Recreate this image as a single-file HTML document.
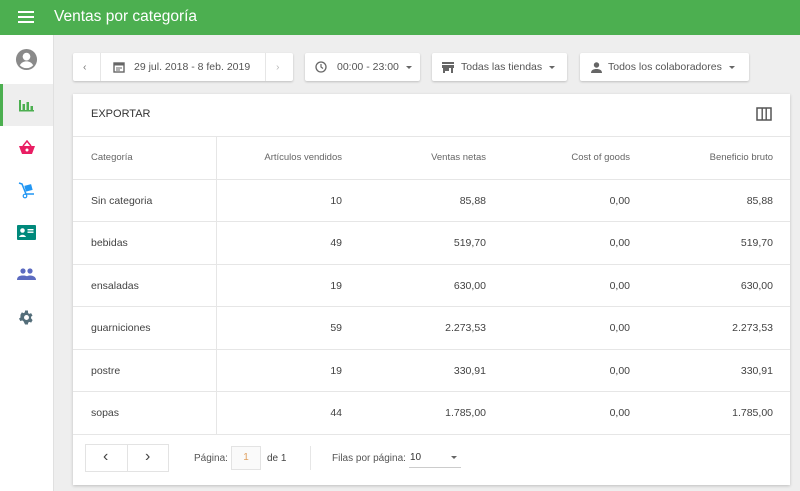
<!DOCTYPE html>
<html><head><meta charset="utf-8"><style>
*{box-sizing:border-box;margin:0;padding:0}
body{width:800px;height:491px;overflow:hidden;background:#eeeeee;font-family:"Liberation Sans",sans-serif;color:#424242;position:relative}
.top{position:absolute;left:0;top:0;width:800px;height:35px;background:#4caf50;color:#fff}
.top .t{position:absolute;left:54px;top:8px;font-size:15.5px}
.side{position:absolute;left:0;top:35px;width:54px;height:456px;background:#fff;border-right:1px solid #e0e0e0}
.ic{position:absolute;left:15px}
.btn{position:absolute;top:53px;height:28px;background:#fff;box-shadow:0 1px 2px rgba(0,0,0,.2);border-radius:2px;font-size:10.5px;color:#555;line-height:28px;white-space:nowrap}
.card{position:absolute;left:73px;top:94px;width:717px;height:391px;background:#fff;box-shadow:0 1px 3px rgba(0,0,0,.2)}
.row{position:absolute;left:0;width:717px;border-top:1px solid #e6e6e6;font-size:10.5px}
.row span{position:absolute;top:0}
.c0{left:18px}
.vl{position:absolute;left:143px;top:42px;width:1px;height:298px;background:#e6e6e6}
.caret{display:inline-block;width:0;height:0;border-left:3.5px solid transparent;border-right:3.5px solid transparent;border-top:3.5px solid #666;vertical-align:middle;margin-left:7px}
.f{position:absolute;font-size:10px;white-space:nowrap}
</style></head><body>
<div class="top">
<svg style="position:absolute;left:18px;top:11px" width="16" height="13"><rect y="0" width="16" height="2" fill="#fff"/><rect y="5" width="16" height="2" fill="#fff"/><rect y="10" width="16" height="2" fill="#fff"/></svg>
<div class="t">Ventas por categoría</div></div>
<div class="side">
<svg class="ic" style="top:13px;left:15px" width="23" height="23" viewBox="0 0 24 24"><circle cx="12" cy="12" r="11" fill="#8a8a8a"/><circle cx="12" cy="9" r="4" fill="#fff"/><path d="M5 18c2-3 4-4 7-4s5 1 7 4c-2 2-4 3-7 3s-5-1-7-3z" fill="#fff"/></svg>
<div style="position:absolute;left:0;top:49px;width:53px;height:42px;background:#eeeeee;border-left:3px solid #4caf50"></div>
<svg class="ic" style="top:64px;left:19px" width="15" height="13"><rect x="0" y="1" width="2" height="11" fill="#4caf50"/><rect x="3.5" y="5" width="2.5" height="7" fill="#4caf50"/><rect x="7.5" y="3" width="2.5" height="9" fill="#4caf50"/><rect x="11.5" y="7" width="2.5" height="5" fill="#4caf50"/><rect x="0" y="11" width="15" height="1.5" fill="#4caf50"/></svg>
<svg class="ic" style="top:105px;left:18px" width="18" height="16"><path d="M5 6l4-5 4 5" stroke="#e91e63" stroke-width="1.5" fill="none"/><path d="M1 6h16l-3 8H4z" fill="#e91e63"/><circle cx="9" cy="10" r="1.5" fill="#fff"/></svg>
<svg class="ic" style="top:146px;left:18px" width="18" height="18"><path d="M1 2l3 1 4 10h8" stroke="#2196f3" stroke-width="1.5" fill="none"/><rect x="7" y="4" width="7" height="6" fill="#2196f3" transform="rotate(-15 10 7)"/><circle cx="7" cy="15" r="1.8" fill="none" stroke="#2196f3" stroke-width="1.2"/></svg>
<svg class="ic" style="top:190px;left:17px" width="19" height="15"><rect width="19" height="15" rx="1" fill="#00897b"/><circle cx="5.5" cy="5.5" r="2.3" fill="#fff"/><path d="M2 12c1-3 6-3 7 0z" fill="#fff"/><rect x="10.5" y="4" width="6" height="1.4" fill="#fff"/><rect x="10.5" y="6.5" width="6" height="1.4" fill="#fff"/></svg>
<svg class="ic" style="top:233px;left:17px" width="19" height="12"><circle cx="6" cy="3" r="2.6" fill="#5c6bc0"/><circle cx="13" cy="3" r="2.6" fill="#5c6bc0"/><path d="M0 12c0-3.5 2.5-4.5 6-4.5s6 1 6 4.5z" fill="#5c6bc0"/><path d="M8.5 12c0-3.5 2-4.5 4.5-4.5s6 1 6 4.5z" fill="#5c6bc0"/></svg>
<svg class="ic" style="top:274px;left:18px" width="17" height="17" viewBox="0 0 24 24"><path fill="#546e7a" d="M19.4 13c.04-.3.06-.65.06-1s-.02-.7-.07-1l2.1-1.65-2-3.46-2.5 1a7.3 7.3 0 0 0-1.7-1L15 2.2h-4l-.38 2.650c-.6.25-1.2.6-1.700 1l-2.500-1-2 3.460L4.500 10c-.05.3-.08.66-.08 1s.03.7.08 1l-2.1 1.65 2 3.46 2.5-1c.52.4 1.1.75 1.7 1L11 21.8h4l.38-2.65c.6-.25 1.2-.6 1.7-1l2.5 1 2-3.46zM13 15.5a3.5 3.5 0 1 1 0-7 3.5 3.5 0 0 1 0 7z" transform="translate(-1 0)"/></svg>
</div>
<div class="btn" style="left:73px;width:220px">
<span style="position:absolute;left:10px;color:#777">‹</span>
<div style="position:absolute;left:27px;top:0;width:1px;height:28px;background:#e6e6e6"></div>
<svg style="position:absolute;left:40px;top:8px" width="12" height="12"><rect x="1" y="2" width="10" height="9" fill="none" stroke="#666" stroke-width="1.4"/><rect x="1" y="2" width="10" height="2.5" fill="#666"/><rect x="3" y="6.5" width="6" height="1" fill="#666"/><rect x="3" y="8.5" width="4" height="1" fill="#666"/></svg>
<span style="position:absolute;left:61px">29 jul. 2018 - 8 feb. 2019</span>
<div style="position:absolute;left:192px;top:0;width:1px;height:28px;background:#e6e6e6"></div>
<span style="position:absolute;left:203px;color:#bbb">›</span></div>
<div class="btn" style="left:305px;width:115px">
<svg style="position:absolute;left:10px;top:8px" width="12" height="12"><circle cx="6" cy="6" r="5" fill="none" stroke="#666" stroke-width="1.3"/><path d="M6 3v3l2 1.5" stroke="#666" stroke-width="1.2" fill="none"/></svg>
<span style="position:absolute;left:32px">00:00 - 23:00<span class="caret"></span></span></div>
<div class="btn" style="left:432px;width:135px">
<svg style="position:absolute;left:10px;top:9px" width="12" height="11"><rect x="0" y="0" width="12" height="2" fill="#666"/><rect x="0" y="3" width="12" height="3" fill="#666"/><rect x="1" y="6" width="2" height="5" fill="#666"/><rect x="9" y="6" width="2" height="5" fill="#666"/><rect x="1" y="6" width="6" height="3" fill="#666"/></svg>
<span style="position:absolute;left:29px">Todas las tiendas<span class="caret"></span></span></div>
<div class="btn" style="left:580px;width:169px">
<svg style="position:absolute;left:11px;top:9px" width="11" height="11"><circle cx="5.5" cy="3" r="2.7" fill="#666"/><path d="M0 11c0-3 2.5-4 5.5-4s5.5 1 5.5 4z" fill="#666"/></svg>
<span style="position:absolute;left:28px">Todos los colaboradores<span class="caret"></span></span></div>
<div class="card">
<div style="position:absolute;left:18px;top:14px;font-size:11px;color:#333">EXPORTAR</div>
<svg style="position:absolute;left:683px;top:13px" width="16" height="14"><rect x="1" y="1" width="14" height="12" fill="none" stroke="#555" stroke-width="1.5"/><rect x="5.5" y="1" width="1.4" height="12" fill="#555"/><rect x="9.5" y="1" width="1.4" height="12" fill="#555"/></svg>
<div class="row" style="top:42px;height:43px;font-size:9.5px;color:#666;line-height:42px"><span class="c0">Categoría</span><span style="right:448px">Artículos vendidos</span><span style="right:304px">Ventas netas</span><span style="right:160px">Cost of goods</span><span style="right:17px">Beneficio bruto</span></div>
<div class="row" style="top:85px;line-height:42px"><span class="c0">Sin categoria</span><span style="right:448px">10</span><span style="right:304px">85,88</span><span style="right:160px">0,00</span><span style="right:17px">85,88</span></div>
<div class="row" style="top:127px;line-height:42px"><span class="c0">bebidas</span><span style="right:448px">49</span><span style="right:304px">519,70</span><span style="right:160px">0,00</span><span style="right:17px">519,70</span></div>
<div class="row" style="top:170px;line-height:42px"><span class="c0">ensaladas</span><span style="right:448px">19</span><span style="right:304px">630,00</span><span style="right:160px">0,00</span><span style="right:17px">630,00</span></div>
<div class="row" style="top:212px;line-height:42px"><span class="c0">guarniciones</span><span style="right:448px">59</span><span style="right:304px">2.273,53</span><span style="right:160px">0,00</span><span style="right:17px">2.273,53</span></div>
<div class="row" style="top:255px;line-height:42px"><span class="c0">postre</span><span style="right:448px">19</span><span style="right:304px">330,91</span><span style="right:160px">0,00</span><span style="right:17px">330,91</span></div>
<div class="row" style="top:297px;line-height:42px"><span class="c0">sopas</span><span style="right:448px">44</span><span style="right:304px">1.785,00</span><span style="right:160px">0,00</span><span style="right:17px">1.785,00</span></div>
<div class="row" style="top:340px;height:1px"></div>
<div class="vl"></div>
<div style="position:absolute;left:12px;top:350px;width:84px;height:28px;border:1px solid #e3e3e3;font-size:16px;color:#444">
<span style="position:absolute;left:17px;top:3px">‹</span><div style="position:absolute;left:41px;top:0;width:1px;height:26px;background:#e3e3e3"></div><span style="position:absolute;left:59px;top:3px">›</span></div>
<span class="f" style="left:121px;top:359px;color:#555">Página:</span>
<div style="position:absolute;left:158px;top:352px;width:30px;height:24px;border:1px solid #e3e3e3;background:#fafafa;font-size:10px;color:#e0a060;text-align:center;line-height:22px">1</div>
<span class="f" style="left:194px;top:359px;color:#444">de 1</span>
<div style="position:absolute;left:237px;top:352px;width:1px;height:24px;background:#e6e6e6"></div>
<span class="f" style="left:259px;top:359px;color:#555">Filas por página:</span>
<div style="position:absolute;left:336px;top:354px;width:52px;height:20px;border-bottom:1px solid #ccc;font-size:10px;color:#333;line-height:20px;padding-left:1px">10<span class="caret" style="position:absolute;right:4px;top:8px"></span></div>
</div>
</body></html>
